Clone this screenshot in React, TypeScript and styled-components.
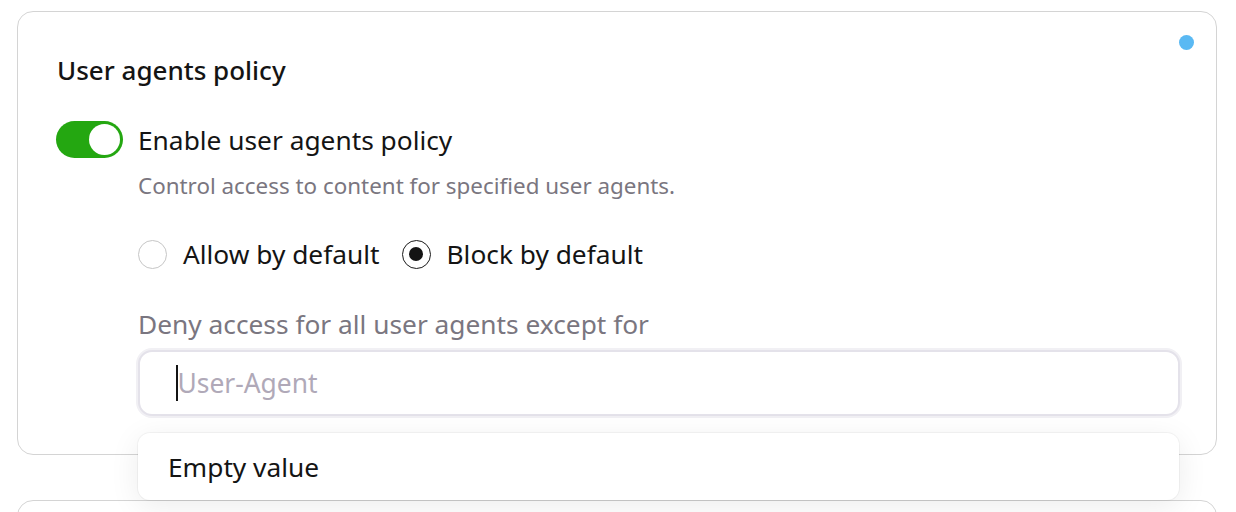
import React from "react";
import styled, { createGlobalStyle } from "styled-components";

const Global = createGlobalStyle`
  html, body { margin: 0; padding: 0; background: #ffffff; }
  body { font-family: "Noto Sans", "Open Sans", sans-serif; color: #141414; }
  * { box-sizing: border-box; }
`;

const Page = styled.div`
  display: flex;
  flex-direction: column;
  gap: 45px;
  padding: 11px 19px 0 17px;
  width: 1236px;
  height: 512px;
  overflow: hidden;
`;

const Card = styled.section`
  position: relative;
  border: 1px solid #d4d4d4;
  border-radius: 16px;
  padding: 42px 36px 38px 38px;
  display: flex;
  flex-direction: column;
  flex-shrink: 0;
`;

const NextCard = styled.section`
  border: 1px solid #d4d4d4;
  border-radius: 16px;
  height: 60px;
  flex-shrink: 0;
`;

const StatusDot = styled.span`
  position: absolute;
  top: 23px;
  right: 22px;
  width: 15px;
  height: 15px;
  border-radius: 50%;
  background: #5ab9f3;
`;

const Title = styled.h2`
  margin: 0 0 0 1px;
  font-size: 26px;
  font-weight: 500;
  line-height: 32px;
  color: #141414;
`;

const ToggleRow = styled.label`
  display: flex;
  align-items: center;
  gap: 15px;
  margin-top: 35px;
`;

const Switch = styled.span<{ $on: boolean }>`
  position: relative;
  width: 67px;
  height: 37px;
  border-radius: 19px;
  background: ${(p) => (p.$on ? "#24a711" : "#cfcfcf")};
  flex-shrink: 0;
  &::after {
    content: "";
    position: absolute;
    top: 3px;
    left: ${(p) => (p.$on ? "33px" : "3px")};
    width: 31px;
    height: 31px;
    border-radius: 50%;
    background: #ffffff;
  }
`;

const ToggleLabel = styled.span`
  font-size: 26.3px;
  line-height: 36px;
  color: #141414;
`;

const Body = styled.div`
  display: flex;
  flex-direction: column;
  padding-left: 82px;
`;

const Hint = styled.p`
  margin: 13px 0 0;
  font-size: 22.4px;
  line-height: 30px;
  color: #7a7680;
`;

const RadioGroup = styled.div`
  display: flex;
  align-items: center;
  gap: 22px;
  margin-top: 35px;
`;

const RadioOption = styled.label`
  display: flex;
  align-items: center;
  gap: 16px;
  font-size: 26.3px;
  line-height: 36px;
  color: #141414;
`;

const RadioCircle = styled.span<{ $checked: boolean }>`
  width: 29px;
  height: 29px;
  border-radius: 50%;
  border: 1.5px solid ${(p) => (p.$checked ? "#1a1a1a" : "#c6c6c6")};
  display: flex;
  align-items: center;
  justify-content: center;
  flex-shrink: 0;
  &::after {
    content: "";
    width: 14px;
    height: 14px;
    border-radius: 50%;
    background: ${(p) => (p.$checked ? "#141414" : "transparent")};
  }
`;

const FieldLabel = styled.div`
  margin-top: 34px;
  font-size: 26.3px;
  line-height: 36px;
  color: #7a7680;
`;

const InputWrap = styled.div`
  position: relative;
  margin-top: 8px;
`;

const InputBox = styled.div`
  height: 66px;
  border: 2px solid #e4e2ea;
  box-shadow: 0 0 0 2px #f1f0f4;
  border-radius: 14px;
  display: flex;
  align-items: center;
  padding-left: 36px;
  background: #ffffff;
`;

const Caret = styled.span`
  width: 1.5px;
  height: 36px;
  background: #141414;
`;

const Placeholder = styled.span`
  font-size: 26.4px;
  color: #b0a9b8;
`;

const Dropdown = styled.div`
  position: absolute;
  left: 0;
  right: 1px;
  top: 83px;
  height: 67px;
  background: #ffffff;
  border-radius: 12px;
  box-shadow: 0 0 0 1px rgba(0, 0, 0, 0.04), 0 6px 30px rgba(0, 0, 0, 0.08);
  display: flex;
  align-items: center;
  padding-left: 30px;
  font-size: 26.3px;
  color: #141414;
  z-index: 2;
`;

export default function App() {
  return (
    <>
      <Global />
      <Page>
        <Card>
          <StatusDot />
          <Title>User agents policy</Title>
          <ToggleRow>
            <Switch $on={true} />
            <ToggleLabel>Enable user agents policy</ToggleLabel>
          </ToggleRow>
          <Body>
            <Hint>Control access to content for specified user agents.</Hint>
            <RadioGroup>
              <RadioOption>
                <RadioCircle $checked={false} />
                Allow by default
              </RadioOption>
              <RadioOption>
                <RadioCircle $checked={true} />
                Block by default
              </RadioOption>
            </RadioGroup>
            <FieldLabel>Deny access for all user agents except for</FieldLabel>
            <InputWrap>
              <InputBox>
                <Caret />
                <Placeholder>User-Agent</Placeholder>
              </InputBox>
              <Dropdown>Empty value</Dropdown>
            </InputWrap>
          </Body>
        </Card>
        <NextCard />
      </Page>
    </>
  );
}
